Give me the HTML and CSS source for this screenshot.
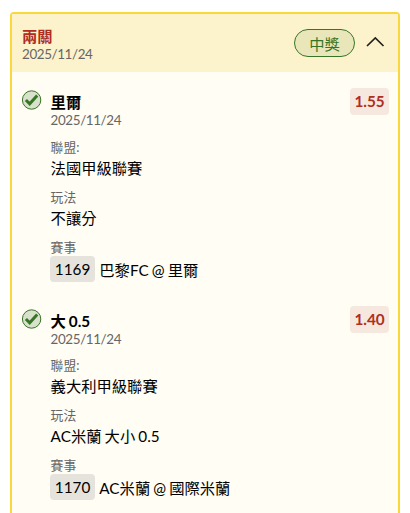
FILE: index.html
```
<!DOCTYPE html>
<html lang="zh-Hant">
<head>
    <meta charset="UTF-8">
    <meta name="viewport" content="width=device-width, initial-scale=1.0">
    <title>兩關</title>
    <link rel="stylesheet" href="styles.css">
</head>
<body>

    <div class="card">
        <!-- Header -->
        <div class="card-header">
            <div class="header-info">
                <div class="header-title">兩關</div>
                <div class="date">2025/11/24</div>
            </div>
            <span class="status">中獎</span>
            <svg class="arrow" width="20" height="12" viewBox="0 0 20 12">
                <path d="M2 10 L10.3 2 L18.5 10" fill="none" stroke="#222" stroke-width="1.7"/>
            </svg>
        </div>

        <!-- Selections -->
        <div class="bet">
            <svg class="check" width="20" height="20" viewBox="0 0 20 20">
                <circle cx="9.6" cy="10" r="9.2" fill="#d7e1cb" stroke="#387426" stroke-width="1"/>
                <path d="M3.9 10 L7.7 13.8 L15.2 5.6" fill="none" stroke="#387426" stroke-width="3"/>
            </svg>
            <div class="bet-info">
                <div class="bet-title">里爾</div>
                <div class="date">2025/11/24</div>
                <div class="field">
                    <div class="label">聯盟:</div>
                    <div class="value">法國甲級聯賽</div>
                </div>
                <div class="field">
                    <div class="label">玩法</div>
                    <div class="value">不讓分</div>
                </div>
                <div class="field">
                    <div class="label">賽事</div>
                    <div class="match"><span class="code">1169</span><span>巴黎FC @ 里爾</span></div>
                </div>
            </div>
            <span class="odds">1.55</span>
        </div>

        <div class="bet">
            <svg class="check" width="20" height="20" viewBox="0 0 20 20">
                <circle cx="9.6" cy="10" r="9.2" fill="#d7e1cb" stroke="#387426" stroke-width="1"/>
                <path d="M3.9 10 L7.7 13.8 L15.2 5.6" fill="none" stroke="#387426" stroke-width="3"/>
            </svg>
            <div class="bet-info">
                <div class="bet-title">大 0.5</div>
                <div class="date">2025/11/24</div>
                <div class="field">
                    <div class="label">聯盟:</div>
                    <div class="value">義大利甲級聯賽</div>
                </div>
                <div class="field">
                    <div class="label">玩法</div>
                    <div class="value">AC米蘭 大小 0.5</div>
                </div>
                <div class="field">
                    <div class="label">賽事</div>
                    <div class="match"><span class="code">1170</span><span>AC米蘭 @ 國際米蘭</span></div>
                </div>
            </div>
            <span class="odds">1.40</span>
        </div>
    </div>

</body>
</html>
```
FILE: styles.css
```
/* General Style */
* {
    box-sizing: border-box;
}
body {
    margin: 0;
    padding: 12px 10px 0;
    background-color: #ffffff;
    color: #000;
    font-family: Lato, "Noto Sans CJK TC", sans-serif;
    font-size: 15.3px;
    word-spacing: -0.8px;
}

/* Card */
.card {
    height: 501px;
    border: 2px solid #fad83c;
    border-bottom: none;
    border-radius: 4px 4px 0 0;
    background-color: #fffdf4;
}
.card-header {
    display: flex;
    align-items: center;
    height: 58px;
    padding: 0 13px 0 10px;
    background-color: #fcf2cb;
}
.header-info {
    flex: 1;
    padding-top: 2px;
}
.header-title {
    color: #b02d22;
    font-weight: bold;
    line-height: 20px;
}
.date {
    color: #666;
    font-size: 13.4px;
    letter-spacing: -0.38px;
    line-height: 17px;
}
.status {
    width: 61px;
    height: 28px;
    margin-right: 10px;
    border: 1px solid #387426;
    border-radius: 14px;
    background-color: #e9e6b9;
    color: #387426;
    line-height: 28px;
    text-align: center;
}
.arrow {
    margin-bottom: 3px;
}

/* Selection */
.bet {
    display: flex;
    align-items: flex-start;
    height: 218.4px;
    padding: 16px 9px 0 10px;
}
.check {
    margin: 2.2px 8.6px 0 0;
}
.bet-info {
    flex: 1;
    padding-top: 4.2px;
}
.bet-title {
    font-weight: bold;
    line-height: 20px;
}
.field {
    margin-top: 8px;
}
.date + .field {
    margin-top: 8.5px;
}
.label {
    color: #666;
    font-size: 12.8px;
    line-height: 18px;
}
.value {
    line-height: 24px;
}
.match {
    display: flex;
    gap: 4px;
    line-height: 28px;
}
.code {
    height: 26px;
    padding: 0 5px;
    margin-left: -0.8px;
    border-radius: 4px;
    background-color: #e6e3dd;
    line-height: 26px;
}
.odds {
    width: 39px;
    height: 27px;
    border-radius: 4px;
    background-color: #f6e8de;
    color: #b02d22;
    font-weight: bold;
    line-height: 27px;
    text-align: center;
}
```
